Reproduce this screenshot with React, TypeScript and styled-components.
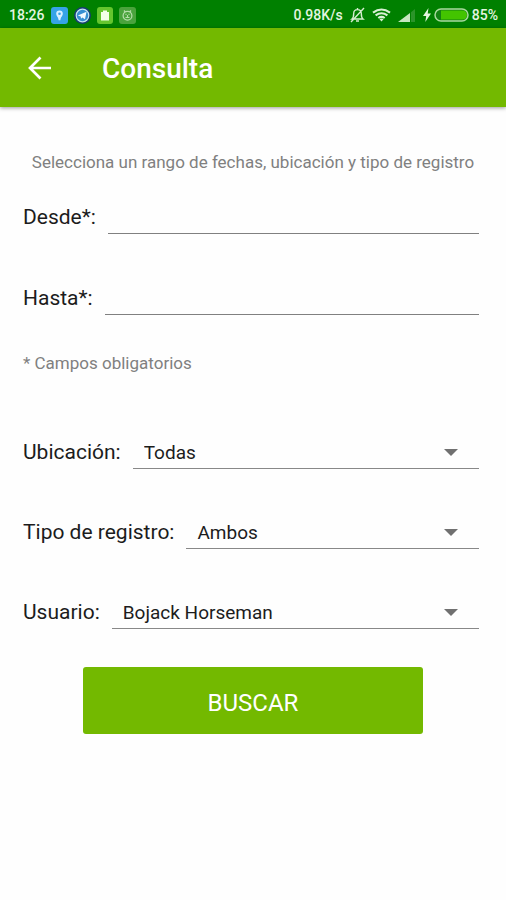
import React from "react";
import styled, { createGlobalStyle } from "styled-components";

const GlobalStyle = createGlobalStyle`
  *, *::before, *::after { box-sizing: border-box; }
  body { margin: 0; background: #fefefe; font-family: Roboto, sans-serif; color: #1c1c1c; }
`;

const StatusBar = styled.div`
  display: flex;
  align-items: center;
  justify-content: space-between;
  height: 28px;
  padding: 2px 8px 0 9px;
  background: #008000;
  color: #e4f5e0;
  font-size: 14px;
  font-weight: 500;
  line-height: 20px;
`;

const StatusGroup = styled.div<{ $gap: number }>`
  display: flex;
  align-items: center;
  gap: ${(p) => p.$gap}px;
  svg { display: block; flex: none; }
`;

const Power = styled.div`
  display: flex;
  align-items: center;
  gap: 3px;
`;

const AppBar = styled.header`
  display: flex;
  align-items: center;
  gap: 46px;
  height: 79px;
  padding: 2px 24px 0;
  background: #73b900;
  color: #fff;
  box-shadow: 0 1px 4px rgba(0, 0, 0, 0.4);
`;

const BackButton = styled.button`
  display: flex;
  padding: 0;
  border: 0;
  background: none;
  color: inherit;
  cursor: pointer;
`;

const Title = styled.h1`
  margin: 0;
  font-size: 28px;
  font-weight: 500;
  line-height: 38px;
`;

const Form = styled.form`
  display: flex;
  flex-direction: column;
  padding: 44px 23px 24px;
`;

const Hint = styled.p<{ $center?: boolean }>`
  margin: 0;
  text-align: ${(p) => (p.$center ? "center" : "left")};
  font-size: 17px;
  line-height: 22px;
  color: #808080;
`;

const Fields = styled.div<{ $gap: number; $top: number; $bottom: number }>`
  display: flex;
  flex-direction: column;
  gap: ${(p) => p.$gap}px;
  padding: ${(p) => p.$top}px 4px ${(p) => p.$bottom}px 0;
`;

const Field = styled.div`
  display: flex;
  gap: 12px;
  height: 36px;
`;

const Label = styled.label`
  flex: none;
  font-size: 21px;
  line-height: 38px;
`;

const DateInput = styled.input`
  flex: 1;
  min-width: 0;
  padding: 0 4px;
  border: 0;
  border-bottom: 1px solid #808080;
  border-radius: 0;
  outline: 0;
  background: none;
  font: 19px Roboto, sans-serif;
  color: inherit;
`;

const SelectBox = styled.div`
  display: grid;
  flex: 1;
  min-width: 0;
  align-items: center;
  border-bottom: 1px solid #888;
  svg {
    grid-area: 1 / 1;
    justify-self: end;
    margin: 3px 21px 0 0;
    pointer-events: none;
  }
`;

const Select = styled.select`
  grid-area: 1 / 1;
  width: 100%;
  height: 35px;
  padding: 3px 40px 0 11px;
  border: 0;
  outline: 0;
  appearance: none;
  background: none;
  font: 19px Roboto, sans-serif;
  color: inherit;
`;

const SubmitButton = styled.button`
  align-self: center;
  width: 74%;
  height: 67px;
  padding: 4px 0 0;
  border: 0;
  border-radius: 3px;
  background: #73b900;
  color: #fff;
  font: 24px Roboto, sans-serif;
  cursor: pointer;
`;

const PinIcon = () => (
  <svg width="17" height="17" viewBox="0 0 17 17">
    <rect width="17" height="17" rx="3" fill="#36a3e6" />
    <path d="M8.5 3.5a3.3 3.3 0 0 1 3.3 3.3c0 2.4-2.2 3.2-2.4 6.4H7.6C7.4 10 5.2 9.2 5.2 6.8A3.3 3.3 0 0 1 8.5 3.5Z" fill="#d8f0ff" />
    <circle cx="8.5" cy="6.8" r="1.3" fill="#36a3e6" />
  </svg>
);

const TelegramIcon = () => (
  <svg width="17" height="17" viewBox="0 0 17 17">
    <circle cx="8.5" cy="8.5" r="8.5" fill="#163c70" />
    <circle cx="8.5" cy="8.5" r="6.3" fill="#368fd2" stroke="#c4e4f4" strokeWidth="1.2" />
    <path d="M3.8 8.5 12.5 4.8 11 12.3 8.3 10.4 7 11.7 6.7 9.4Z" fill="#f0faff" />
  </svg>
);

const BagIcon = () => (
  <svg width="16" height="17" viewBox="0 0 16 17">
    <rect width="16" height="17" rx="3" fill="#65c52e" />
    <path d="M4 5h2V3.500h4V5h2v8.500H4Z" fill="#f3ffe9" />
  </svg>
);

const RobotIcon = () => (
  <svg width="17" height="17" viewBox="0 0 17 17">
    <rect width="17" height="17" rx="3" fill="#4aa33c" />
    <g fill="none" stroke="#b5deaa" strokeWidth="1.2">
      <path d="M5 3.500 6.300 5M12 3.500 10.700 5" />
      <circle cx="8.5" cy="8.8" r="4.4" />
      <path d="M6.500 7.300h1M9.500 7.300h1M6.500 10.500h4M8.500 8v2.500" />
    </g>
  </svg>
);

const MutedBellIcon = () => (
  <svg width="15" height="16" viewBox="0 0 15 16" fill="none" stroke="#d5edcf" strokeWidth="1.4">
    <path d="M2 12h11c-1.500-1.200-1.700-2.500-1.700-5.500C11.300 4 9.800 2.600 7.500 2.600S3.700 4 3.700 6.500C3.700 9.500 3.500 10.800 2 12ZM6 14h3M7.500 1v1.500M14 1 1 15" />
  </svg>
);

const WifiIcon = () => (
  <svg width="19" height="14" viewBox="0 0 19 14" fill="none" stroke="#d9f0d5" strokeWidth="2.1">
    <path d="M1 4.700Q9.500-1.700 18 4.700M3.600 7.400q5.900-4.300 11.800 0M6.300 10q3.200-2.200 6.400 0" />
    <path d="m7.500 11.200 2 2.300 2-2.300Q9.500 9.800 7.500 11.200Z" fill="#d9f0d5" stroke="none" />
  </svg>
);

const SignalIcon = () => (
  <svg width="18" height="13" viewBox="0 0 18 13">
    <path d="M0 13 12 4v9Z" fill="#c7e6c0" />
    <path d="M13 3.200 17 0v13h-4Z" fill="#2b942a" />
  </svg>
);

const BoltIcon = () => (
  <svg width="8" height="14" viewBox="0 0 8 14">
    <path d="M5.500 0 0 8h3.200L2.300 14 8 5.500H4.700Z" fill="#e4f7df" />
  </svg>
);

const BatteryIcon = () => (
  <svg width="35" height="14" viewBox="0 0 35 14">
    <rect x="1" y="1" width="33" height="12" rx="6" fill="#138213" stroke="#a9d99e" strokeWidth="1.5" />
    <path d="M7 2.500h21.500a4.500 4.500 0 0 1 0 9H7Z" fill="#43c400" />
  </svg>
);

const ArrowIcon = () => (
  <svg width="32" height="32" viewBox="0 0 32 32" fill="none" stroke="currentColor" strokeWidth="2.7">
    <path d="M27 15H6.500M16.500 4.500 6 15l10.500 10.500" />
  </svg>
);

const CaretIcon = () => (
  <svg width="14" height="7" viewBox="0 0 14 7">
    <path d="M0 0h14L7 7Z" fill="#707070" />
  </svg>
);

const dateFields = [
  { id: "desde", label: "Desde*:" },
  { id: "hasta", label: "Hasta*:" },
];

const selectFields = [
  { id: "ubicacion", label: "Ubicación:", value: "Todas" },
  { id: "tipo", label: "Tipo de registro:", value: "Ambos" },
  { id: "usuario", label: "Usuario:", value: "Bojack Horseman" },
];

export default function App() {
  return (
    <>
      <GlobalStyle />
      <StatusBar>
        <StatusGroup $gap={6}>
          <span>18:26</span>
          <PinIcon />
          <TelegramIcon />
          <BagIcon />
          <RobotIcon />
        </StatusGroup>
        <StatusGroup $gap={7}>
          <span>0.98K/s</span>
          <MutedBellIcon />
          <WifiIcon />
          <SignalIcon />
          <Power>
            <BoltIcon />
            <BatteryIcon />
            <span>85%</span>
          </Power>
        </StatusGroup>
      </StatusBar>
      <AppBar>
        <BackButton type="button" aria-label="Volver">
          <ArrowIcon />
        </BackButton>
        <Title>Consulta</Title>
      </AppBar>
      <Form onSubmit={(e) => e.preventDefault()}>
        <Hint $center>Selecciona un rango de fechas, ubicación y tipo de registro</Hint>
        <Fields $gap={45} $top={25} $bottom={37}>
          {dateFields.map((f) => (
            <Field key={f.id}>
              <Label htmlFor={f.id}>{f.label}</Label>
              <DateInput id={f.id} name={f.id} type="text" />
            </Field>
          ))}
        </Fields>
        <Hint>* Campos obligatorios</Hint>
        <Fields $gap={44} $top={59} $bottom={38}>
          {selectFields.map((f) => (
            <Field key={f.id}>
              <Label htmlFor={f.id}>{f.label}</Label>
              <SelectBox>
                <Select id={f.id} name={f.id} defaultValue={f.value}>
                  <option>{f.value}</option>
                </Select>
                <CaretIcon />
              </SelectBox>
            </Field>
          ))}
        </Fields>
        <SubmitButton type="submit">BUSCAR</SubmitButton>
      </Form>
    </>
  );
}
